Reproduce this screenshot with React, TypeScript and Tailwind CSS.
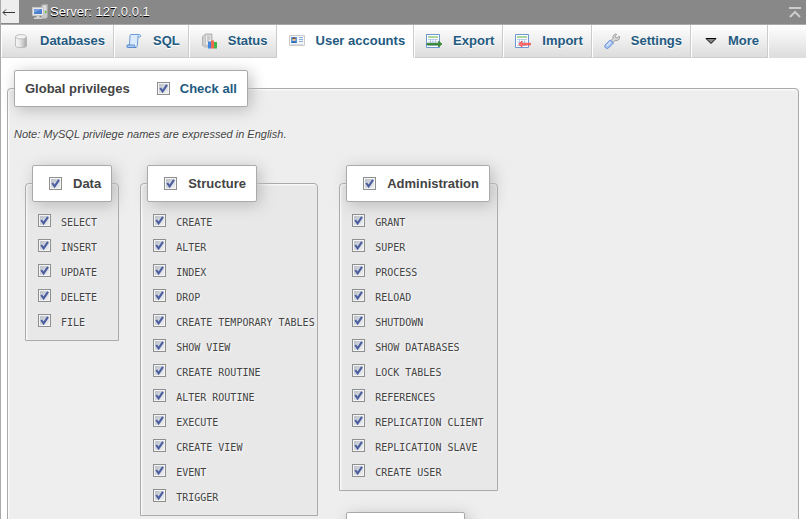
import type { ReactNode } from "react";

const legendClass =
  "flex h-[37px] items-center rounded-[2px] border border-[#aaa] bg-white px-[10px] text-[13px] font-bold leading-4 text-[#444] shadow-[3px_3px_15px_#bbb]";
const panelClass =
  "min-w-0 rounded-t border border-[#aaa] pl-[6px] shadow-[inset_1px_1px_2px_#fff] [text-shadow:1px_1px_2px_#fff]";

function Tick({ id }: { id: string }) {
  return (
    <span className="relative block size-[13px] shrink-0">
      <input
        id={id}
        type="checkbox"
        defaultChecked
        className="peer block size-[13px] appearance-none border border-[#8e8f8f] bg-linear-to-br from-[#b4bac4] to-[#f6f6f6] shadow-[inset_0_0_0_1px_#f4f4f4]"
      />
      <svg
        viewBox="0 0 13 13"
        className="pointer-events-none absolute inset-0 hidden size-[13px] peer-checked:block"
        aria-hidden="true"
      >
        <path d="M3.200 6 5.600 9.400 10 2.800" fill="none" stroke="#4b5fa0" strokeWidth="2.100" />
      </svg>
    </span>
  );
}

function DatabaseIcon() {
  return (
    <svg viewBox="0 0 16 16" className="size-4">
      <defs>
        <linearGradient id="cyl">
          <stop offset="0" stopColor="#f8f8f8" />
          <stop offset="0.4" stopColor="#e6e6e6" />
          <stop offset="1" stopColor="#a8a8a8" />
        </linearGradient>
      </defs>
      <path d="M2.500 4v9c0 1 2.500 1.700 5.500 1.700s5.500-.7 5.500-1.700V4z" fill="url(#cyl)" stroke="#b0b0b0" strokeWidth=".8" />
      <ellipse cx="8" cy="3.800" rx="5.500" ry="2.200" fill="#f3f3f3" stroke="#b5b5b5" strokeWidth=".8" />
    </svg>
  );
}

function SqlIcon() {
  return (
    <svg viewBox="0 0 16 16" className="size-4">
      <path d="M5 1.500h8.500c1.500 0 1.700 2.500 0 2.500H12l-.7 8.500c0 1.500-.8 2-1.800 2H2c-1.500 0-1.500-2.500 0-2.500h1.500L4 3c0-1 .4-1.500 1-1.500z" fill="#dcebfb" stroke="#6b9bd8" />
      <path d="M2 12h6.500c.2 1.500.6 2.500 1.500 2.500H2c-1.500 0-1.500-2.500 0-2.500z" fill="#a9caf2" stroke="#4f83c8" strokeWidth=".8" />
      <path d="M12 4V2.500" stroke="#6b9bd8" />
    </svg>
  );
}

function StatusIcon() {
  return (
    <svg viewBox="0 0 16 16" className="size-4">
      <path d="M1.500 3.500 4.500 1H11v11l-2 2H4l-2.500-1.500z" fill="#cfcfcf" stroke="#aaa" strokeWidth=".8" />
      <path d="M4.500 2h6v10h-6z" fill="#ededed" stroke="#b5b5b5" strokeWidth=".6" />
      <path d="M6 4h3.500M6 6h3.500M6 8h2" stroke="#999" strokeWidth=".8" />
      <path d="M7 8.500h3v7H7z" fill="#4387df" />
      <path d="M10 7.500h3v8h-3z" fill="#ef6a4c" />
      <path d="M13 9h3v6.500h-3z" fill="#43b649" />
    </svg>
  );
}

function UsersIcon() {
  return (
    <svg viewBox="0 0 16 16" className="size-4">
      <path d="M.5 2.500h15v10H.5z" fill="#f6f6f6" stroke="#cbcbcb" />
      <path d="M2 4h6v6H2z" fill="#5b9ae6" />
      <path d="M2.500 10c0-2.500 5-2.500 5 0z" fill="#2864b6" />
      <circle cx="5" cy="6.600" r="1.700" fill="#f0c090" />
      <path d="M3.200 6.300c0-2.300 3.600-2.300 3.600 0-1-.7-2.200-.7-3.600 0z" fill="#704b25" />
      <path d="M10 4.500h4M10 6.500h4M10 8.500h4" stroke="#89aedc" />
      <path d="M2 11.500h12" stroke="#dadada" />
    </svg>
  );
}

function TransferIcon({ into }: { into?: boolean }) {
  return (
    <svg viewBox="0 0 16 16" className="size-4">
      <path d="M.5 1.500h13v13H.5z" fill="#fff" stroke="#6c97d0" />
      <path d="M2 3h10v2H2z" fill="#a9d69b" />
      <path d="M2 6.500h10M2 9h10M2 12.500h10M4.500 6v7M7 6v7M9.500 6v7" stroke="#a9c1e4" strokeWidth=".8" />
      {into ? (
        <path d="M3.500 11 7 8.300v2h8.500v1.700H7v2z" fill="#ff7570" stroke="#f03535" strokeWidth=".6" />
      ) : (
        <path d="M16 11l-3.500-2.700v2H1v1.700h11.500v2z" fill="#3c9136" stroke="#247321" strokeWidth=".6" />
      )}
    </svg>
  );
}

function SettingsIcon() {
  return (
    <svg viewBox="0 0 16 16" className="size-4">
      <path d="M7 7.500 9 5.500c-.6-2 .5-4 2.800-4.500l.8.3-1.400 2 .6 1.400 1.600.2 1.500-1.700.8.500c.3 2.500-2 4.500-4.500 3.800L9 9.500z" fill="#d9d9d9" stroke="#8c8c8c" strokeWidth=".8" />
      <path d="M1.200 12 6.200 7l3.200 3-4.900 5C2.500 16.500-.3 14 1.200 12z" fill="#a9c6f5" stroke="#5c85d2" strokeWidth=".9" />
      <path d="M2.800 12.800 6.500 9" stroke="#dceaff" strokeWidth="1.200" />
    </svg>
  );
}

function MoreIcon() {
  return (
    <svg viewBox="0 0 14 16" className="h-4 w-[14px]">
      <path d="M3 5.500h10L8 10.500z" fill="#888" stroke="#000" />
    </svg>
  );
}

function ServerIcon() {
  return (
    <svg viewBox="0 0 16 16" className="size-4">
      <path d="M9.500 1.500 11 .5h4.500v12.500l-1.500 1.500h-4.500z" fill="#c8c8c8" stroke="#aaa" strokeWidth=".8" />
      <path d="M11 3h3M11 5h3" stroke="#f5f5f5" />
      <path d="M13 7h1.500v2H13z" fill="#58c13b" />
      <path d="M.5 3.500h11v8H.5z" fill="#e8e8e8" stroke="#c5c5c5" />
      <path d="M2 5h8v5H2z" fill="#4a7fd0" />
      <path d="M2 5h8L2 9z" fill="#759fe0" />
      <path d="M4.500 12h3v1.500H10V15H2v-1.500h2.500z" fill="#d5d5d5" />
    </svg>
  );
}

const tabs: { label: string; icon: ReactNode; active?: boolean }[] = [
  { label: "Databases", icon: <DatabaseIcon /> },
  { label: "SQL", icon: <SqlIcon /> },
  { label: "Status", icon: <StatusIcon /> },
  { label: "User accounts", icon: <UsersIcon />, active: true },
  { label: "Export", icon: <TransferIcon /> },
  { label: "Import", icon: <TransferIcon into /> },
  { label: "Settings", icon: <SettingsIcon /> },
  { label: "More", icon: <MoreIcon /> },
];

const dataPrivileges = ["SELECT", "INSERT", "UPDATE", "DELETE", "FILE"];
const structurePrivileges = [
  "CREATE",
  "ALTER",
  "INDEX",
  "DROP",
  "CREATE TEMPORARY TABLES",
  "SHOW VIEW",
  "CREATE ROUTINE",
  "ALTER ROUTINE",
  "EXECUTE",
  "CREATE VIEW",
  "EVENT",
  "TRIGGER",
];
const adminPrivileges = [
  "GRANT",
  "SUPER",
  "PROCESS",
  "RELOAD",
  "SHUTDOWN",
  "SHOW DATABASES",
  "LOCK TABLES",
  "REFERENCES",
  "REPLICATION CLIENT",
  "REPLICATION SLAVE",
  "CREATE USER",
];

function PrivilegeGroup({ title, items, width }: { title: string; items: string[]; width?: string }) {
  return (
    <fieldset className={`${panelClass} bg-[#e8e8e8] pt-[6px] pr-[6px] pb-[7px] ${width ?? ""}`}>
      <legend className={`${legendClass} gap-[11px] pl-4`}>
        <Tick id={`group-${title}`} />
        <label htmlFor={`group-${title}`}>{title}</label>
      </legend>
      <ul className="pl-[6px]">
        {items.map((name) => (
          <li key={name} className="flex h-[25px] items-center gap-[10px]">
            <Tick id={`priv-${name}`} />
            <label
              htmlFor={`priv-${name}`}
              className="pt-1 font-['DejaVu_Sans_Mono',monospace] text-[10px] leading-3 whitespace-nowrap text-[#444]"
            >
              {name}
            </label>
          </li>
        ))}
      </ul>
    </fieldset>
  );
}

export default function App() {
  return (
    <div className="min-h-screen border-l border-[#aaa] bg-white font-['Liberation_Sans',Arial,sans-serif] text-[13px] text-[#444]">
      <header className="flex h-6 items-center bg-[#888]">
        <button type="button" aria-label="Back" className="mb-px h-[23px] w-[18px] bg-[#eee] text-[#333]">
          <svg viewBox="0 0 18 23" className="h-[23px] w-[18px]">
            <path d="M2 12.500h12M5 9.500l-3 3 3 3" fill="none" stroke="#333" />
          </svg>
        </button>
        <a
          href="#server"
          className="ml-[13px] flex items-center gap-[2px] leading-4 text-white [text-shadow:0_1px_0_#000]"
        >
          <ServerIcon />
          Server: 127.0.0.1
        </a>
        <a href="#top" aria-label="Back to top" className="mr-[5px] ml-auto">
          <svg viewBox="0 0 12 12" className="size-3">
            <path d="M0 2h12M1 11l5-5 5 5" fill="none" stroke="#ccc" strokeWidth="2" />
          </svg>
        </a>
      </header>
      <nav className="flex h-[34px] border-t border-[#aaa] bg-linear-to-b from-white to-[#dcdcdc]">
        {tabs.map(({ label, icon, active }) => (
          <a
            key={label}
            href={`#${label}`}
            className={`flex items-center gap-[11px] border-r border-b border-l border-r-[#ccc] border-l-white pr-2 pl-[11px] font-bold text-[#235a81] [text-shadow:0_1px_0_#fff] ${
              active ? "border-b-white bg-white" : "border-b-[#ccc]"
            }`}
          >
            {icon}
            {label}
          </a>
        ))}
        <span className="w-px bg-white" />
      </nav>

      <main className="pt-3 pr-[7px] pl-[6px]">
        <fieldset className={`${panelClass} bg-[#eee] pr-[6px] pb-4`}>
          <legend className={`${legendClass} gap-[27px]`}>
            Global privileges
            <span className="flex items-center gap-[10px]">
              <Tick id="check-all" />
              <label htmlFor="check-all" className="text-[#235a81]">
                Check all
              </label>
            </span>
          </legend>
          <p className="mt-5 text-[11px] leading-[14px] italic">
            Note: MySQL privilege names are expressed in English.
          </p>
          <div className="mt-6 flex items-start gap-[21px] pl-[11px]">
            <PrivilegeGroup title="Data" items={dataPrivileges} />
            <PrivilegeGroup title="Structure" items={structurePrivileges} width="w-[178px]" />
            <div className="flex flex-col gap-[21px]">
              <PrivilegeGroup title="Administration" items={adminPrivileges} width="w-[159px]" />
              <fieldset className={`${panelClass} bg-[#e8e8e8] pb-[7px]`}>
                <legend className={legendClass}>Resource limits</legend>
              </fieldset>
            </div>
          </div>
        </fieldset>
      </main>
    </div>
  );
}
